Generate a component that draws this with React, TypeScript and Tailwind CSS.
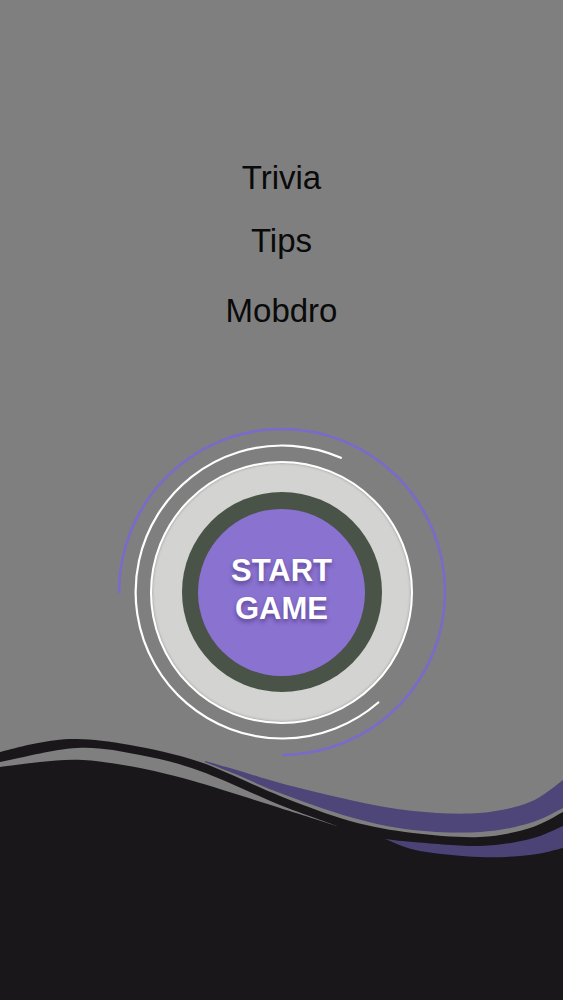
import React from 'react';

type Pt = [number, number];

// catmull-rom -> cubic bezier, so the wave can be given as a few points
const curve = (pts: Pt[], start: 'M' | 'L') => {
  let d = `${start}${pts[0][0]} ${pts[0][1]}`;
  for (let i = 0; i < pts.length - 1; i++) {
    const p0 = pts[i - 1] || pts[i];
    const p1 = pts[i];
    const p2 = pts[i + 1];
    const p3 = pts[i + 2] || p2;
    const c1x = p1[0] + (p2[0] - p0[0]) / 6;
    const c1y = p1[1] + (p2[1] - p0[1]) / 6;
    const c2x = p2[0] - (p3[0] - p1[0]) / 6;
    const c2y = p2[1] - (p3[1] - p1[1]) / 6;
    d += ` C${c1x.toFixed(1)} ${c1y.toFixed(1)} ${c2x.toFixed(1)} ${c2y.toFixed(1)} ${p2[0]} ${p2[1]}`;
  }
  return d;
};

const rev = (pts: Pt[]) => [...pts].reverse();

// top of the dark stroke
const blackTop: Pt[] = [
  [0, 752], [38, 743], [77, 739], [130, 745], [200, 762], [280, 796],
  [350, 821], [413, 833], [480, 837], [530, 828], [563, 812],
];
const blackBottom: Pt[] = [
  [0, 762], [77, 748], [140, 755], [200, 771], [280, 805], [340, 827],
];
const darkTop: Pt[] = [
  [0, 767], [40, 762], [83, 760], [140, 768], [200, 783], [280, 808], [340, 827],
];
const upperTop: Pt[] = [
  [205, 761], [240, 771], [280, 783], [350, 800], [413, 811], [480, 813], [530, 802], [563, 780],
];
const upperBottom: Pt[] = [
  [205, 762], [240, 776], [280, 793], [350, 817], [413, 830], [480, 832], [530, 823], [563, 808],
];
const lowerTop: Pt[] = [
  [385, 839], [413, 842], [480, 846], [530, 839], [563, 826],
];
const lowerBottom: Pt[] = [
  [385, 839], [420, 851], [480, 857], [530, 855], [563, 848],
];

const darkPath = `${curve(blackTop, 'M')} L563 1000 L0 1000 Z`;
const gapPath = `${curve(blackBottom, 'M')} ${curve(rev(darkTop), 'L')} Z`;
const upperPath = `${curve(upperTop, 'M')} ${curve(rev(upperBottom), 'L')} Z`;
const lowerPath = `${curve(lowerTop, 'M')} ${curve(rev(lowerBottom), 'L')} Z`;

function StartButton() {
  return (
    <div className="relative z-10 mx-auto flex h-[340px] w-[340px] items-center justify-center">
      {/* thin arcs around the button */}
      <svg className="absolute inset-0" width="340" height="340" viewBox="0 0 340 340" fill="none">
        <path d="M7 170 A163 163 0 1 1 171.4 333" stroke="#7b69cc" strokeWidth="2.6" strokeLinecap="round" />
        <path d="M228.9 35.8 A146.5 146.5 0 1 0 266.3 280.5" stroke="#ffffff" strokeWidth="2.2" strokeLinecap="round" />
      </svg>
      <div className="relative flex h-[263px] w-[263px] items-center justify-center rounded-full border-[2.5px] border-white bg-[#d3d3d1] shadow-[inset_0_0_3px_rgba(0,0,0,0.3)]">
        <div className="flex h-[200px] w-[200px] items-center justify-center rounded-full bg-[#4a5347]">
          <button className="flex h-[167px] w-[167px] flex-col items-center justify-center rounded-full bg-[#8a72d0] pb-[4px] font-['Liberation_Sans',Arial,sans-serif] text-[31px] font-bold leading-[38px] text-white [text-shadow:0_3px_4px_rgba(40,20,80,0.45)]">
            <span>START</span>
            <span>GAME</span>
          </button>
        </div>
      </div>
    </div>
  );
}

export default function App() {
  return (
    <div className="flex h-[1000px] w-full flex-col overflow-hidden bg-[#7f7f7f]">
      {/* menu items */}
      <div className="flex flex-col items-center pt-[161px] font-['Liberation_Sans',Arial,sans-serif] text-[33px] leading-none text-[#0a0a0a]">
        <div className="h-[33px]">Trivia</div>
        <div className="mt-[30px] h-[33px]">Tips</div>
        <div className="mt-[37px] h-[33px]">Mobdro</div>
      </div>

      <div className="mt-[95px]">
        <StartButton />
      </div>

      {/* bottom waves */}
      <svg className="-mt-[26px] block shrink-0" width="563" height="264" viewBox="0 736 563 264" preserveAspectRatio="none">
        <path d={darkPath} fill="#19171a" />
        <path d={gapPath} fill="#7f7f7f" />
        <path d={upperPath} fill="#4e4578" />
        <path d={lowerPath} fill="#4b4376" />
      </svg>
    </div>
  );
}
